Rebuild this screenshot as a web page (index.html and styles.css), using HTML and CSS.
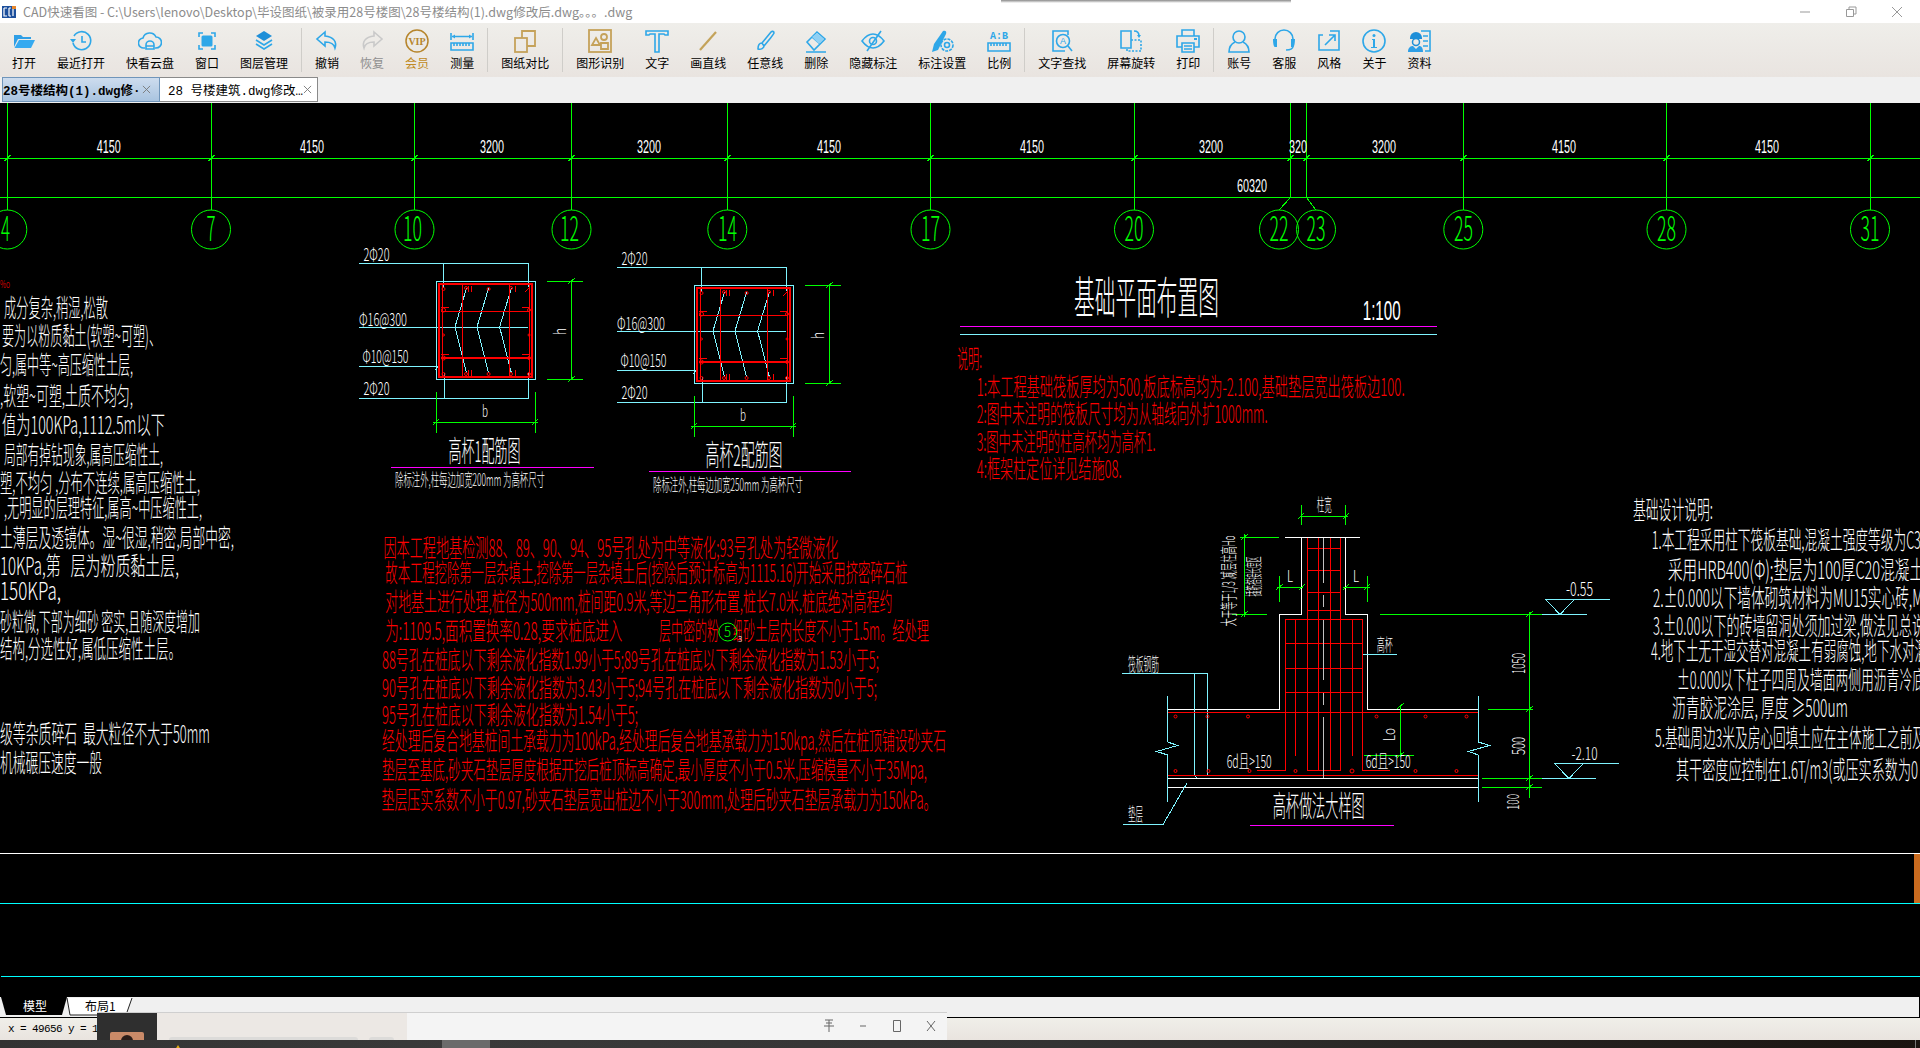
FILE: index.html
```html
<!DOCTYPE html>
<html lang="zh-CN">
<head>
<meta charset="utf-8">
<title>CAD快速看图</title>
<link rel="stylesheet" href="styles.css">
</head>
<body>
<div class="app">
  <header class="titlebar">
    <svg class="app-logo" viewBox="0 0 14 12"><rect width="14" height="12" fill="#1d4f9c"/><path d="M2 2h3M2 2v8h3M7 2v8M7 2h2M7 10h2M11 2v8" fill="none" stroke="#fff" stroke-width="1.2"/><rect x="10" y="0" width="4" height="3" fill="#e8872b"/></svg>
    <span class="title-text">CAD快速看图 - C:\Users\lenovo\Desktop\毕设图纸\被录用28号楼图\28号楼结构(1).dwg修改后.dwg。。。.dwg</span>
    <div class="win-controls">
      <svg class="win-btn" viewBox="0 0 46 20"><path d="M18 10h10" stroke="#999" fill="none"/></svg>
      <svg class="win-btn" viewBox="0 0 46 20"><path d="M18.500 7.500h7v7h-7zM21 7V5h7v7h-2.500" stroke="#999" fill="none"/></svg>
      <svg class="win-btn" viewBox="0 0 46 20"><path d="M18 5l10 10M28 5l-10 10" stroke="#999" fill="none"/></svg>
    </div>
    <div class="title-shadow"></div>
  </header>

  <nav class="toolbar">
    <div class="tool"><svg class="icon" viewBox="0 0 24 24"><path d="M2 18V6h7l2 2h8v2H6z" fill="#2f9fe6"/><path d="M2.500 19L7 11h16l-4 8z" fill="#36aaf0"/></svg><span>打开</span></div>
    <div class="tool"><svg class="icon" viewBox="0 0 24 24"><path class="s" d="M5 7a9 9 0 1 1-1 7"/><path d="M1 10h6l-3 4z" fill="#2ea7e8"/><path class="s" d="M13 7v6h4" stroke-width="2"/></svg><span>最近打开</span></div>
    <div class="tool"><svg class="icon" viewBox="0 0 24 24"><path class="s" d="M7 19H6a5 5 0 0 1-1-10 7 7 0 0 1 13-1 5.500 5.500 0 0 1 0 11h-1"/><path class="s" d="M8 20v-4a4 4 0 0 1 8 0v4zM8 17h8"/></svg><span>快看云盘</span></div>
    <div class="tool"><svg class="icon" viewBox="0 0 24 24"><path class="s" d="M4 8V4h4M16 4h4v4M20 16v4h-4M8 20H4v-4"/><rect x="6.500" y="6.500" width="11" height="11" rx="1.500" fill="#2ea7e8"/></svg><span>窗口</span></div>
    <div class="tool"><svg class="icon" viewBox="0 0 24 24"><path d="M12 2l8 5-8 5-8-5z" fill="#1f8fd8"/><path class="s" d="M4 11l8 5 8-5M4 15l8 5 8-5" stroke-width="2"/></svg><span>图层管理</span></div>
    <div class="sep"></div>
    <div class="tool"><svg class="icon" viewBox="0 0 24 24"><path class="s" d="M10 3L2 10l8 7v-4c6 0 9 2 10 6 2-6-1-11-10-12z"/></svg><span>撤销</span></div>
    <div class="tool off"><svg class="icon" viewBox="0 0 24 24"><path d="M14 3l8 7-8 7v-4c-6 0-9 2-10 6-2-6 1-11 10-12z" fill="none" stroke="#c9c9c9" stroke-width="1.600"/></svg><span>恢复</span></div>
    <div class="tool vip"><svg class="icon" viewBox="0 0 24 24"><circle cx="12" cy="12" r="11" fill="none" stroke="#b6852c" stroke-width="1.500"/><text x="12" y="15.500" class="vip-text">VIP</text></svg><span>会员</span></div>
    <div class="tool"><svg class="icon" viewBox="0 0 24 24"><path class="s" d="M1 4v7M23 4v7M2 7.500h20"/><path d="M2 7.500l3-2v4zM22 7.500l-3-2v4z" fill="#2ea7e8"/><path class="s" d="M1 14h22v7H1zM4 14v3M7 14v3M10 14v3M13 14v3M16 14v3M19 14v3"/></svg><span>测量</span></div>
    <div class="sep"></div>
    <div class="tool"><svg class="icon" viewBox="0 0 24 24"><path class="gd" d="M9 9V2h13v15h-8"/><rect class="gd" x="2" y="9" width="12" height="14"/></svg><span>图纸对比</span></div>
    <div class="sep"></div>
    <div class="tool"><svg class="icon" viewBox="0 0 24 24"><rect class="gd" x="1" y="1" width="22" height="22"/><circle class="gd" cx="16" cy="8" r="3"/><path class="gd" d="M8 9l4 7H4zM13 14h7v6h-7z"/></svg><span>图形识别</span></div>
    <div class="tool"><svg class="icon" viewBox="0 0 24 24"><path class="s" d="M1 2h22v4h-3l-1-1h-5v18h-4V5H5L4 6H1z"/></svg><span>文字</span></div>
    <div class="tool"><svg class="icon" viewBox="0 0 24 24"><path d="M4 21L20 3" stroke="#c4a35a" stroke-width="2.200" fill="none"/></svg><span>画直线</span></div>
    <div class="tool"><svg class="icon" viewBox="0 0 24 24"><path class="s" d="M9 14L18 3c1-1 3-1 3 1 0 1-10 13-10 13zM9 14c-3 0-4 3-4 6 3 1 6-1 6-3z"/></svg><span>任意线</span></div>
    <div class="tool"><svg class="icon" viewBox="0 0 24 24"><path class="s" d="M3 13l10-10 8 7-11 11zM2 23h20M8 8l8 7"/><path d="M13 4l7 6-5 5-7-7z" fill="#8fd0f4"/></svg><span>删除</span></div>
    <div class="tool"><svg class="icon" viewBox="0 0 24 24"><path class="s" d="M1 12c3-4 7-7 11-7s8 3 11 7c-3 4-7 7-11 7s-8-3-11-7z"/><circle class="s" cx="12" cy="12" r="3.500"/><path class="s" d="M20 2L6 22"/></svg><span>隐藏标注</span></div>
    <div class="tool"><svg class="icon" viewBox="0 0 24 24"><path d="M2 23l2-8L13 2c2-1 4 0 3 3L8 21z" fill="#2ea7e8"/><circle class="s" cx="17" cy="16" r="6" stroke-dasharray="3 1"/><circle class="s" cx="17" cy="16" r="2.500"/></svg><span>标注设置</span></div>
    <div class="tool"><svg class="icon" viewBox="0 0 24 24"><text x="12" y="10" class="ab-text">A:B</text><path class="s" d="M1 14h22v8H1zM4 14v3M7 14v3M10 14v3M13 14v3M16 14v3M19 14v3"/></svg><span>比例</span></div>
    <div class="sep"></div>
    <div class="tool"><svg class="icon" viewBox="0 0 24 24"><path class="s" d="M15 22H3V2h15v4"/><circle class="s" cx="13" cy="12" r="6.500"/><path class="s" d="M18 17l4 5" stroke-width="2"/><text x="13" y="15" class="find-text">A</text></svg><span>文字查找</span></div>
    <div class="tool"><svg class="icon" viewBox="0 0 24 24"><path class="s" d="M2 2h10v17H2z"/><path class="s" d="M12 11h10v11H8v-3" stroke-dasharray="2 1.500"/><path class="s" d="M15 2c3 0 5 2 5 5"/><path d="M18 6h4l-2 3z" fill="#2ea7e8"/></svg><span>屏幕旋转</span></div>
    <div class="tool"><svg class="icon" viewBox="0 0 24 24"><path class="s" d="M6 7V1h12v6M6 18H1V7h22v11h-5"/><path class="s" d="M6 14h12v9H6zM8 17h8M8 20h8"/><path d="M18 10h3" stroke="#2ea7e8" stroke-width="2"/></svg><span>打印</span></div>
    <div class="sep"></div>
    <div class="tool"><svg class="icon" viewBox="0 0 24 24"><circle class="s" cx="12" cy="8" r="6" stroke-width="2"/><path class="s" d="M8 13c-4 2-6 5-6 10h20c0-5-2-8-6-10" stroke-width="2"/></svg><span>账号</span></div>
    <div class="tool"><svg class="icon" viewBox="0 0 24 24"><path class="s" d="M3 13V10a9 9 0 0 1 18 0v3M21 13v4c0 3-3 4-7 4" stroke-width="2"/><path d="M1 10h4v8H3c-2 0-2-8-2-8zM23 10h-4v8h2c2 0 2-8 2-8z" fill="#2ea7e8"/></svg><span>客服</span></div>
    <div class="tool"><svg class="icon" viewBox="0 0 24 24"><path class="s" d="M13 2H22V21H2V6H6"/><path class="s" d="M8 16L18 6M12 6h6v6" stroke-width="1.400"/></svg><span>风格</span></div>
    <div class="tool"><svg class="icon" viewBox="0 0 24 24"><circle class="s" cx="12" cy="12" r="11"/><path d="M10 10h3v8h2v1H9v-1h2v-7h-1z" fill="#2ea7e8"/><circle cx="12" cy="6.500" r="1.500" fill="#2ea7e8"/></svg><span>关于</span></div>
    <div class="tool"><svg class="icon" viewBox="0 0 24 24"><path class="s" d="M14 2h9v20H18M16 7h5M16 12h5M16 17h5"/><path d="M3 9a6 6 0 0 1 12 0v1H3z" fill="#1f8fd8"/><circle cx="9" cy="13" r="3.500" fill="none" stroke="#1f8fd8" stroke-width="1.500"/><path d="M1 23c0-5 3-6 5-6l3 3 3-3c2 0 4 1 4 6z" fill="#2f9fe6"/></svg><span>资料</span></div>
  </nav>

  <div class="tabs">
    <div class="doc-tab active"><span class="doc-name">28号楼结构(1).dwg修·</span><svg class="doc-close" viewBox="0 0 10 10"><path d="M1 1l8 8M9 1l-8 8"/></svg></div>
    <div class="doc-tab"><span class="doc-name">28 号楼建筑.dwg修改…</span><svg class="doc-close" viewBox="0 0 10 10"><path d="M1 1l8 8M9 1l-8 8"/></svg></div>
  </div>

  <svg class="canvas" viewBox="0 103 1920 894" width="1920" height="894">
    <defs>
      <g id="col">
        <path class="c" d="M359 263H528V287M443.500 263V288M359 327H528M359 366H438M435 370l5-6M359 398H528V373M444.500 398V373"/>
        <rect class="c" x="436.500" y="281" width="98.500" height="98"/>
        <path class="c" d="M466.500 288L455 327L466.500 373M488.600 288L477 327L488.600 373M511.400 288L499.600 327L511.400 373"/>
        <rect class="rl b2" x="439" y="284" width="93" height="93"/>
        <path class="rl" d="M442 284V377M529 284V377M441 311H530M462.400 285V376M509 285V376M441 307h8M522 307h8M441 354h8M522 354h8M525 292l5-5M468 286v6M471 286v6M515 286v6M468 376v-6M471 376v-6M515 376v-6"/>
        <path class="rl b2" d="M441 358H530"/>
        <g class="dots"><circle cx="443.500" cy="289" r="1.500"/><circle cx="443.500" cy="310" r="2"/><circle cx="443.500" cy="335" r="1"/><circle cx="443.500" cy="358" r="2"/><circle cx="443.500" cy="374" r="1.500"/><circle cx="466" cy="288" r="1.500"/><circle cx="466" cy="374" r="1.500"/><circle cx="488.600" cy="289" r="1.500"/><circle cx="488.600" cy="374" r="1.500"/><circle cx="511" cy="288" r="1.500"/><circle cx="511" cy="374" r="1.500"/><circle cx="529" cy="310" r="1.500"/><circle cx="529" cy="335" r="1"/><circle cx="529" cy="358" r="1.500"/><circle cx="529" cy="374" r="1.500"/></g>
        <path class="g" d="M547 281H583.400M547 379H583.400M571.700 281V379M568 284l7-6M568 382l7-6M436.500 392V433M535 392V433M433 422H538M433 425l6-6M532 425l6-6"/>
        <text class="w" x="363.500" y="261" font-size="18" textLength="26" lengthAdjust="spacingAndGlyphs">2Φ20</text>
        <text class="w" x="359" y="326" font-size="18" textLength="48" lengthAdjust="spacingAndGlyphs">Φ16@300</text>
        <text class="w" x="362.500" y="363" font-size="18" textLength="46" lengthAdjust="spacingAndGlyphs">Φ10@150</text>
        <text class="w" x="363.500" y="395" font-size="18" textLength="26" lengthAdjust="spacingAndGlyphs">2Φ20</text>
        <text class="w" x="482" y="417" font-size="16" textLength="6" lengthAdjust="spacingAndGlyphs">b</text>
        <text class="w" font-size="17" textLength="7" lengthAdjust="spacingAndGlyphs" transform="translate(566 335) rotate(-90)">h</text>
      </g>
    </defs>

    <!-- axis grid -->
    <path class="g" d="M0 158.500H1920M0 197.500H1920M7.500 103V210M211.500 103V210M414.500 103V210M571.500 103V210M727.500 103V210M930.500 103V210M1134.500 103V210M1290.500 103V197.500L1279 210M1306.500 103V197.500L1316 210M1463.500 103V210M1666.500 103V210M1870.500 103V210"/>
    <path class="g" d="M4.500 161l6-6M208.500 161l6-6M411.500 161l6-6M568.500 161l6-6M724.500 161l6-6M927.500 161l6-6M1131.500 161l6-6M1287.500 161l6-6M1303.500 161l6-6M1460.500 161l6-6M1663.500 161l6-6M1867.500 161l6-6"/>
    <g class="axis">
      <circle cx="7.300" cy="229.500" r="19.500"/><circle cx="211" cy="229.500" r="19.500"/><circle cx="414.500" cy="229.500" r="19.500"/><circle cx="571.500" cy="229.500" r="19.500"/><circle cx="727.300" cy="229.500" r="19.500"/><circle cx="930.500" cy="229.500" r="19.500"/><circle cx="1134" cy="229.500" r="19.500"/><circle cx="1279" cy="229.500" r="19.500"/><circle cx="1316" cy="229.500" r="19.500"/><circle cx="1463.300" cy="229.500" r="19.500"/><circle cx="1666.500" cy="229.500" r="19.500"/><circle cx="1870" cy="229.500" r="19.500"/>
    </g>
    <g class="axis-no" font-size="34">
      <text x="1" y="241" textLength="9" lengthAdjust="spacingAndGlyphs">4</text>
      <text x="206.500" y="241" textLength="9" lengthAdjust="spacingAndGlyphs">7</text>
      <text x="403" y="241" textLength="19" lengthAdjust="spacingAndGlyphs">10</text>
      <text x="560" y="241" textLength="19" lengthAdjust="spacingAndGlyphs">12</text>
      <text x="718" y="241" textLength="19" lengthAdjust="spacingAndGlyphs">14</text>
      <text x="921" y="241" textLength="19" lengthAdjust="spacingAndGlyphs">17</text>
      <text x="1124.500" y="241" textLength="19" lengthAdjust="spacingAndGlyphs">20</text>
      <text x="1269.500" y="241" textLength="19" lengthAdjust="spacingAndGlyphs">22</text>
      <text x="1306.500" y="241" textLength="19" lengthAdjust="spacingAndGlyphs">23</text>
      <text x="1454" y="241" textLength="19" lengthAdjust="spacingAndGlyphs">25</text>
      <text x="1657" y="241" textLength="19" lengthAdjust="spacingAndGlyphs">28</text>
      <text x="1860.500" y="241" textLength="19" lengthAdjust="spacingAndGlyphs">31</text>
    </g>
    <g class="dim" font-size="18">
      <text x="96.700" y="153" textLength="24" lengthAdjust="spacingAndGlyphs">4150</text>
      <text x="300" y="153" textLength="24" lengthAdjust="spacingAndGlyphs">4150</text>
      <text x="480" y="153" textLength="24" lengthAdjust="spacingAndGlyphs">3200</text>
      <text x="637" y="153" textLength="24" lengthAdjust="spacingAndGlyphs">3200</text>
      <text x="817" y="153" textLength="24" lengthAdjust="spacingAndGlyphs">4150</text>
      <text x="1020" y="153" textLength="24" lengthAdjust="spacingAndGlyphs">4150</text>
      <text x="1199" y="153" textLength="24" lengthAdjust="spacingAndGlyphs">3200</text>
      <text x="1289" y="153" textLength="18" lengthAdjust="spacingAndGlyphs">320</text>
      <text x="1372" y="153" textLength="24" lengthAdjust="spacingAndGlyphs">3200</text>
      <text x="1552" y="153" textLength="24" lengthAdjust="spacingAndGlyphs">4150</text>
      <text x="1755" y="153" textLength="24" lengthAdjust="spacingAndGlyphs">4150</text>
      <text x="1237" y="192" textLength="30" lengthAdjust="spacingAndGlyphs">60320</text>
    </g>

    <!-- left notes -->
    <text class="rt" x="0" y="288" font-size="11" textLength="10" lengthAdjust="spacingAndGlyphs">%o</text>
    <g class="w" font-size="25">
      <text x="4" y="317" textLength="104" lengthAdjust="spacingAndGlyphs">成分复杂,稍湿,松散</text>
      <text x="2" y="345" textLength="159" lengthAdjust="spacingAndGlyphs">要为以粉质黏土(软塑~可塑)、</text>
      <text x="0" y="374" textLength="133" lengthAdjust="spacingAndGlyphs">匀,属中等~高压缩性土层,</text>
      <text x="0" y="405" textLength="133" lengthAdjust="spacingAndGlyphs">,软塑~可塑,土质不均匀,</text>
      <text x="2" y="434" textLength="163" lengthAdjust="spacingAndGlyphs">值为100KPa,1112.5m以下</text>
      <text x="4" y="464" textLength="159" lengthAdjust="spacingAndGlyphs">局部有掉钻现象,属高压缩性土,</text>
      <text x="0" y="492" textLength="200" lengthAdjust="spacingAndGlyphs">塑,不均匀 ,分布不连续,属高压缩性土,</text>
      <text x="4" y="517" textLength="198" lengthAdjust="spacingAndGlyphs">,无明显的层理特征,属高~中压缩性土,</text>
      <text x="0" y="547" textLength="234" lengthAdjust="spacingAndGlyphs">土薄层及透镜体。湿~很湿,稍密,局部中密,</text>
      <text x="0" y="575" textLength="179" lengthAdjust="spacingAndGlyphs">10KPa,第   层为粉质黏土层,</text>
      <text x="0" y="600" textLength="61" lengthAdjust="spacingAndGlyphs">150KPa,</text>
      <text x="0" y="631" textLength="200" lengthAdjust="spacingAndGlyphs">砂粒微,下部为细砂 密实,且随深度增加</text>
      <text x="0" y="658" textLength="181" lengthAdjust="spacingAndGlyphs">结构,分选性好,属低压缩性土层。</text>
      <text x="0" y="743" textLength="210" lengthAdjust="spacingAndGlyphs">级等杂质碎石  最大粒径不大于50mm</text>
      <text x="0" y="772" textLength="102" lengthAdjust="spacingAndGlyphs">机械碾压速度一般</text>
    </g>

    <!-- column details -->
    <use href="#col"/>
    <use href="#col" transform="translate(258 4)"/>
    <path class="m" d="M391 467.500H593.500M648.500 471.500H850.500"/>
    <text class="w" x="448.500" y="462" font-size="29" textLength="72" lengthAdjust="spacingAndGlyphs">高杯1配筋图</text>
    <text class="w" x="705.500" y="466" font-size="29" textLength="77" lengthAdjust="spacingAndGlyphs">高杯2配筋图</text>
    <text class="w" x="395" y="486" font-size="17" textLength="150" lengthAdjust="spacingAndGlyphs">除标注外,柱每边加宽200mm 为高杯尺寸</text>
    <text class="w" x="653" y="491" font-size="17" textLength="150" lengthAdjust="spacingAndGlyphs">除标注外,柱每边加宽250mm 为高杯尺寸</text>

    <!-- red foundation notes -->
    <g class="rt" font-size="25">
      <text x="383.500" y="557" textLength="455" lengthAdjust="spacingAndGlyphs">因本工程地基检测88、89、90、94、95号孔处为中等液化;93号孔处为轻微液化</text>
      <text x="385.300" y="582" textLength="522" lengthAdjust="spacingAndGlyphs">故本工程挖除第一层杂填土,挖除第一层杂填土后(挖除后预计标高为1115.16)开始采用挤密碎石桩</text>
      <text x="385.300" y="611" textLength="507" lengthAdjust="spacingAndGlyphs">对地基土进行处理,桩径为500mm,桩间距0.9米,等边三角形布置,桩长7.0米,桩底绝对高程约</text>
      <text x="385.300" y="640" textLength="237" lengthAdjust="spacingAndGlyphs">为:1109.5,面积置换率0.28,要求桩底进入</text>
      <text x="659" y="640" textLength="60" lengthAdjust="spacingAndGlyphs">层中密的粉</text>
      <text x="733" y="640" textLength="9" lengthAdjust="spacingAndGlyphs">细</text>
      <text x="743" y="640" textLength="186" lengthAdjust="spacingAndGlyphs">砂土层内长度不小于1.5m。经处理</text>
      <text x="382" y="669" textLength="497" lengthAdjust="spacingAndGlyphs">88号孔在桩底以下剩余液化指数1.99小于5;89号孔在桩底以下剩余液化指数为1.53小于5;</text>
      <text x="382" y="697" textLength="495" lengthAdjust="spacingAndGlyphs">90号孔在桩底以下剩余液化指数为3.43小于5;94号孔在桩底以下剩余液化指数为0小于5;</text>
      <text x="382" y="724" textLength="256" lengthAdjust="spacingAndGlyphs">95号孔在桩底以下剩余液化指数为1.54小于5;</text>
      <text x="382" y="750" textLength="564" lengthAdjust="spacingAndGlyphs">经处理后复合地基桩间土承载力为100kPa,经处理后复合地基承载力为150kpa,然后在桩顶铺设砂夹石</text>
      <text x="382" y="779" textLength="545" lengthAdjust="spacingAndGlyphs">垫层至基底,砂夹石垫层厚度根据开挖后桩顶标高确定,最小厚度不小于0.5米,压缩模量不小于35Mpa,</text>
      <text x="381.500" y="809" textLength="555" lengthAdjust="spacingAndGlyphs">垫层压实系数不小于0.97,砂夹石垫层宽出桩边不小于300mm,处理后砂夹石垫层承载力为150kPa。</text>
    </g>
    <circle class="axis" cx="727.800" cy="632" r="9"/>
    <text class="axis-no" x="724" y="637" font-size="14" textLength="7" lengthAdjust="spacingAndGlyphs">5</text>
    <text class="w" x="738" y="642" font-size="8">3</text>

    <!-- plan title -->
    <text class="w" x="1074" y="314" font-size="44" textLength="145" lengthAdjust="spacingAndGlyphs">基础平面布置图</text>
    <text class="dim" x="1362.700" y="320" font-size="28" textLength="38" lengthAdjust="spacingAndGlyphs">1:100</text>
    <path class="m" d="M960 326.500H1436.500"/>
    <path class="c" d="M960 334.500H1436.500"/>
    <g class="rt" font-size="25">
      <text x="957" y="368" textLength="25" lengthAdjust="spacingAndGlyphs">说明:</text>
      <text x="976.700" y="396" textLength="428" lengthAdjust="spacingAndGlyphs">1:本工程基础筏板厚均为500,板底标高均为-2.100,基础垫层宽出筏板边100.</text>
      <text x="976.700" y="423" textLength="291" lengthAdjust="spacingAndGlyphs">2:图中未注明的筏板尺寸均为从轴线向外扩1000mm.</text>
      <text x="976.700" y="451" textLength="179" lengthAdjust="spacingAndGlyphs">3:图中未注明的柱高杯均为高杯1.</text>
      <text x="976.700" y="478" textLength="145" lengthAdjust="spacingAndGlyphs">4:框架柱定位详见结施08.</text>
    </g>

    <!-- footing section -->
    <path class="wl" d="M1285 537.500H1360M1301.700 537.500V614.500H1279.700V709.500H1167.700M1345.700 537.500V614.500H1367.300V709.500H1478.300M1167.700 778.500H1478.300M1167.700 787.500H1478.300"/>
    <path class="c" d="M1167.700 696V742L1177.700 745.500L1156.700 751.500L1167.700 755V802M1478.300 696V742L1489.300 745.500L1468.300 751.500L1478.300 755V802M1122.300 673.500H1207.300V775.500M1194.300 673.500V775.500L1197 778M1123 824.500H1163L1186.700 783.500M1362.300 654.500H1396.700"/>
    <path class="rl" d="M1307.300 537.700V770.500H1340.700V537.700M1318.300 537.700V770M1330 537.700V770M1307.300 548.500H1340.700M1307.300 570.500H1340.700M1307.300 592.500H1340.700M1307.300 610.500H1340.700M1285.300 619.500H1362.700M1285.300 619.500V770.500H1256.700M1362.700 619.500V770.500H1390M1295.300 619.500V755.500M1352.300 619.500V755.500M1285.300 643.500H1362.700M1285.300 668.500H1362.700M1285.300 692.500H1362.700M1167.700 712.500H1478.300M1167.700 775.500H1478.300"/>
    <g class="dots"><circle cx="1175.500" cy="716.500" r="1.500"/><circle cx="1207.500" cy="716.500" r="1.500"/><circle cx="1248" cy="716.500" r="1.500"/><circle cx="1376.500" cy="716.500" r="1.500"/><circle cx="1425.500" cy="716.500" r="1.500"/><circle cx="1466.500" cy="716.500" r="1.500"/><circle cx="1175.500" cy="771" r="1.500"/><circle cx="1208.500" cy="771" r="1.500"/><circle cx="1249.500" cy="771" r="1.500"/><circle cx="1295.500" cy="771" r="1.500"/><circle cx="1352" cy="771" r="2"/><circle cx="1415.500" cy="771" r="1.500"/><circle cx="1456.500" cy="771" r="1.500"/></g>
    <path class="gray" d="M1323.500 537.700V582.500M1323.500 595V607M1323.500 620V680M1323.500 692.500V705M1323.500 717V778"/>
    <path class="g" d="M1300 516.500H1348M1301.700 505V525M1345.700 505V525M1298 519l6-6M1343 519l6-6M1244.500 534V617M1240 537.500H1279M1231.700 614.500H1266.700M1241 540l7-6M1241 617l7-6M1279.700 576V601.700M1276.700 587.500H1303.300M1276 590l7-6M1299 590l6-6M1367.300 576V601.700M1343.300 587.500H1370M1343 590l6-6M1364 590l6-6M1380 614.500H1541.700M1529.500 611.700V797.500M1488.300 709.500H1532.700M1481.700 778.500H1541.700M1481.700 787.500H1541.700M1526 617l7-6M1526 712l7-6M1526 781l7-6M1526 790l7-6M1400.500 706.700V756.700M1364 755.500H1413.500M1397 709l7-6M1397 758l7-6"/>
    <path class="c" d="M1541.700 614.500H1586.700M1545 599.500H1610M1545.700 599.500L1560 614.500L1574.300 599.500M1541.700 778.500H1596M1554 763.500H1618.500M1554.500 763.500L1569 778.500L1583.300 763.500"/>
    <g class="w">
      <text x="1128" y="671" font-size="18" textLength="31" lengthAdjust="spacingAndGlyphs">筏板钢筋</text>
      <text x="1128" y="821" font-size="18" textLength="15" lengthAdjust="spacingAndGlyphs">垫层</text>
      <text x="1376.700" y="651" font-size="17" textLength="16" lengthAdjust="spacingAndGlyphs">高杯</text>
      <text x="1316.700" y="511" font-size="17" textLength="15" lengthAdjust="spacingAndGlyphs">柱宽</text>
      <text font-size="17" textLength="91" lengthAdjust="spacingAndGlyphs" transform="translate(1235 626.500) rotate(-90)">大于等于1/3 减层柱高Ho</text>
      <text font-size="17" textLength="40" lengthAdjust="spacingAndGlyphs" transform="translate(1260 596.500) rotate(-90)">插筋搭接长度区</text>
      <text x="1287" y="582" font-size="16" textLength="6" lengthAdjust="spacingAndGlyphs">L</text>
      <text x="1353" y="582" font-size="16" textLength="6" lengthAdjust="spacingAndGlyphs">L</text>
      <text x="1566" y="596" font-size="19" textLength="27" lengthAdjust="spacingAndGlyphs">-0.55</text>
      <text x="1571.500" y="760" font-size="17" textLength="26" lengthAdjust="spacingAndGlyphs">-2.10</text>
      <text font-size="18" textLength="21" lengthAdjust="spacingAndGlyphs" transform="translate(1525 674) rotate(-90)">1050</text>
      <text font-size="18" textLength="18" lengthAdjust="spacingAndGlyphs" transform="translate(1525 755) rotate(-90)">500</text>
      <text font-size="16" textLength="16" lengthAdjust="spacingAndGlyphs" transform="translate(1519 810) rotate(-90)">100</text>
      <text font-size="16" textLength="13" lengthAdjust="spacingAndGlyphs" transform="translate(1395 741) rotate(-90)">Lo</text>
      <text x="1226.700" y="768" font-size="18" textLength="45" lengthAdjust="spacingAndGlyphs">6d且&gt;150</text>
      <text x="1365.700" y="768" font-size="18" textLength="45" lengthAdjust="spacingAndGlyphs">6d且&gt;150</text>
      <text x="1272.700" y="817" font-size="29" textLength="92" lengthAdjust="spacingAndGlyphs">高杯做法大样图</text>
    </g>
    <path class="m" d="M1250 825.500H1393.500"/>

    <!-- design notes -->
    <g class="w" font-size="25">
      <text x="1633" y="519" textLength="80" lengthAdjust="spacingAndGlyphs">基础设计说明:</text>
      <text x="1651.700" y="549" textLength="276" lengthAdjust="spacingAndGlyphs">1.本工程采用柱下筏板基础,混凝土强度等级为C35</text>
      <text x="1668" y="579" textLength="256" lengthAdjust="spacingAndGlyphs">采用HRB400(Φ);垫层为100厚C20混凝土</text>
      <text x="1653" y="607" textLength="270" lengthAdjust="spacingAndGlyphs">2.±0.000以下墙体砌筑材料为MU15实心砖,M</text>
      <text x="1653" y="635" textLength="272" lengthAdjust="spacingAndGlyphs">3.±0.00以下的砖墙留洞处须加过梁,做法见总说</text>
      <text x="1651" y="660" textLength="276" lengthAdjust="spacingAndGlyphs">4.地下土无干湿交替对混凝土有弱腐蚀,地下水对混</text>
      <text x="1677" y="689" textLength="248" lengthAdjust="spacingAndGlyphs">±0.000以下柱子四周及墙面两侧用沥青冷底</text>
      <text x="1672" y="717" textLength="176" lengthAdjust="spacingAndGlyphs">沥青胶泥涂层, 厚度 ≥500um</text>
      <text x="1655" y="747" textLength="270" lengthAdjust="spacingAndGlyphs">5.基础周边3米及房心回填土应在主体施工之前及</text>
      <text x="1676" y="779" textLength="242" lengthAdjust="spacingAndGlyphs">其干密度应控制在1.6T/m3(或压实系数为0</text>
    </g>

    <!-- long section lines -->
    <path class="wl" d="M0 853.500H1920"/>
    <path class="cy" d="M0 903.500H1920M1 976.500H1920"/>
    <rect class="strip" x="1914" y="854" width="6" height="49"/>
  </svg>

  <div class="sheetbar">
    <svg class="sheet-tabs" viewBox="0 0 140 20" width="140" height="20">
      <path class="sheet-model" d="M1 0L6 18H62L67 0z"/>
      <text class="sheet-w" x="23" y="14">模型</text>
      <path class="sheet-page" d="M67 1L70 18H126L132 1"/>
      <text class="sheet-k" x="85" y="14">布局1</text>
    </svg>
  </div>

  <div class="statusbar"><span class="coords">x = 49656 y = 1</span></div>

  <footer class="taskbar">
    <svg class="task-warn" viewBox="0 0 10 8"><path d="M5 0l5 8H0z" fill="#e2a813"/></svg>
    <div class="task-active"></div>
    <span class="task-a">1510</span>
    <span class="task-b">17:09</span>
    <div class="task-edge"></div>
  </footer>

  <section class="float-win">
    <div class="fw-side"><div class="avatar"><div class="avatar-dot"></div></div></div>
    <div class="fw-panel"><div class="fw-search"></div><div class="fw-plus"></div></div>
    <div class="fw-main">
      <svg class="fw-btn" viewBox="0 0 12 14"><path d="M2 1h8M6 1v6M1 7h10M6 7v6M3 4h6"/></svg>
      <svg class="fw-btn" viewBox="0 0 12 14"><path d="M3 7h6"/></svg>
      <svg class="fw-btn" viewBox="0 0 12 14"><path d="M2.500 1.500h7v11h-7z"/></svg>
      <svg class="fw-btn" viewBox="0 0 12 14"><path d="M2 2l8 10M10 2L2 12"/></svg>
    </div>
  </section>
</div>
</body>
</html>
```

FILE: styles.css
```css
* { box-sizing: border-box; }
html, body { margin: 0; padding: 0; height: 100%; overflow: hidden; background: #000; }
.app {
  position: relative;
  width: 1920px;
  height: 1048px;
  display: flex;
  flex-direction: column;
  overflow: hidden;
  font-family: "Noto Sans CJK SC", "Noto Sans", sans-serif;
}

/* title bar */
.titlebar {
  position: relative;
  height: 23px;
  flex: none;
  background: #fff;
  display: flex;
  align-items: center;
  padding-left: 2px;
}
.app-logo { width: 14px; height: 12px; margin-right: 7px; }
.title-text { font: 12.500px/23px "Noto Sans CJK SC", "Noto Sans", sans-serif; color: #8c8c8c; white-space: nowrap; }
.win-controls { margin-left: auto; display: flex; }
.win-btn { width: 46px; height: 20px; }
.title-shadow {
  position: absolute; left: 1001px; top: 0; width: 290px; height: 3px;
  background: linear-gradient(#8a8a8a, #ffffff);
}

/* toolbar */
.toolbar {
  height: 54px;
  flex: none;
  display: flex;
  padding-left: 1.500px;
  background: linear-gradient(#efeeea, #e9e4e0);
}
.tool {
  display: flex;
  flex-direction: column;
  align-items: center;
  padding: 6px 10.500px 0;
  font-size: 12px;
  line-height: 16px;
  color: #000;
  white-space: nowrap;
}
.tool span { margin-top: 2px; }
.tool.off span { color: #8f8f8f; }
.tool.vip span { color: #c08a24; }
.icon { width: 24px; height: 24px; display: block; }
.sep { width: 1px; height: 44px; margin: 5px 2.500px 0; background: #cfcdc9; flex: none; }
.s { fill: none; stroke: #2ea7e8; stroke-width: 1.600; }
.gd { fill: none; stroke: #c5a25a; stroke-width: 1.800; }
.vip-text { font: bold 10px "Liberation Serif", serif; fill: #b6852c; text-anchor: middle; }
.ab-text { font: bold 10px "Liberation Mono", monospace; fill: #2ea7e8; text-anchor: middle; }
.find-text { font: 9px "Liberation Sans", sans-serif; fill: #2ea7e8; text-anchor: middle; }

/* document tabs */
.tabs {
  height: 26px;
  flex: none;
  display: flex;
  align-items: flex-start;
  background: #f0f0f0;
  padding-left: 2px;
}
.doc-tab {
  height: 25px;
  width: 158px;
  display: flex;
  align-items: center;
  justify-content: space-between;
  padding: 0 8px 0 8px;
  background: #fff;
  border: 1px solid #8a8a8a;
  border-left: 0;
  font: 12.500px "Liberation Mono", "Noto Sans CJK SC", monospace;
  color: #000;
  white-space: nowrap;
}
.doc-tab.active {
  background: linear-gradient(#cddcee, #a9c4e0);
  border: 1px solid #7095ba;
  padding-left: 0;
  font-weight: bold;
}
.doc-close { width: 9px; height: 9px; flex: none; }
.doc-close path { stroke: #777; fill: none; }

/* drawing */
.canvas {
  display: block;
  flex: none;
  background: #000;
  shape-rendering: crispEdges;
}
.canvas text { font-family: "Noto Sans CJK SC", "Noto Sans", sans-serif; font-weight: 300; white-space: pre; }
.canvas .dim text, .canvas text.dim { font-family: "Liberation Sans", sans-serif; font-weight: 400; }
.w { fill: #fff; }
.rt { fill: #ff0000; }
.dim { fill: #fff; }
.g { fill: none; stroke: #00ff00; stroke-width: 1; }
.c { fill: none; stroke: #7ff4ff; stroke-width: 1; }
.cy { fill: none; stroke: #00ffff; stroke-width: 1; }
.wl { fill: none; stroke: #fff; stroke-width: 1; }
.rl { fill: none; stroke: #ff0000; stroke-width: 1; }
.rl.b2 { stroke-width: 2; }
.m { fill: none; stroke: #ff00ff; stroke-width: 1; }
.gray { fill: none; stroke: #c0c0c0; stroke-width: 1; }
.dots { fill: none; stroke: #ff0000; stroke-width: 1; shape-rendering: geometricPrecision; }
.axis { fill: none; stroke: #00ff00; stroke-width: 1; shape-rendering: geometricPrecision; }
.axis-no { fill: #00ff00; }
.strip { fill: #c96a1e; }

/* sheet tabs */
.sheetbar {
  height: 21px;
  flex: none;
  background: #f0f0f0;
  border-bottom: 1px solid #000;
  border-right: 1px solid #000;
}
.sheet-tabs { display: block; }
.sheet-model { fill: #000; }
.sheet-page { fill: #fff; stroke: #222; }
.sheet-w, .sheet-k { font: 12px "Noto Sans CJK SC", sans-serif; }
.sheet-w { fill: #fff; }
.sheet-k { fill: #000; }

/* status */
.statusbar {
  height: 22px;
  flex: none;
  background: linear-gradient(#f0efe9, #e9e4df);
  padding-left: 8px;
  font: 11px/22px "Liberation Mono", monospace;
  letter-spacing: -.6px;
  color: #000;
}

/* task bar */
.taskbar {
  position: relative;
  height: 8px;
  flex: none;
  overflow: hidden;
  background: linear-gradient(90deg, #333 0, #3a3a3a 25%, #333 55%, #1a1410 100%);
  color: #fff;
  font: 11px "Noto Sans", sans-serif;
}
.task-warn { position: absolute; left: 173px; top: 5px; width: 10px; height: 8px; }
.task-active { position: absolute; left: 442px; top: 0; width: 48px; height: 8px; background: #6b6b6b; }
.task-a { position: absolute; left: 1443px; top: 5px; }
.task-b { position: absolute; left: 1815px; top: 4px; }
.task-edge { position: absolute; left: 1915px; top: 0; width: 1px; height: 8px; background: #777; }

/* floating window */
.float-win {
  position: absolute;
  left: 97px;
  top: 1012px;
  width: 850px;
  height: 28px;
  display: flex;
  border-top: 1px solid #cfcfcf;
}
.fw-side { width: 60px; background: #2f2f2f; position: relative; overflow: hidden; flex: none; }
.avatar { position: absolute; left: 13px; top: 19px; width: 34px; height: 20px; background: #c98a68; border-radius: 2px; }
.avatar-dot { width: 12px; height: 12px; margin: 3px 0 0 11px; border-radius: 50%; background: #2a1c18; }
.fw-panel { width: 250px; background: #ece8e4; position: relative; overflow: hidden; flex: none; }
.fw-search { position: absolute; left: 12px; top: 24px; width: 189px; height: 10px; background: #dcdbd9; border-radius: 3px; }
.fw-plus { position: absolute; left: 212px; top: 24px; width: 25px; height: 10px; background: #dcdbd9; border-radius: 3px; }
.fw-main { flex: 1; background: #f4f4f4; display: flex; justify-content: flex-end; align-items: center; gap: 22px; padding: 0 10px 2px 0; }
.fw-btn { width: 12px; height: 14px; }
.fw-btn path { fill: none; stroke: #666; stroke-width: 1; }
```
